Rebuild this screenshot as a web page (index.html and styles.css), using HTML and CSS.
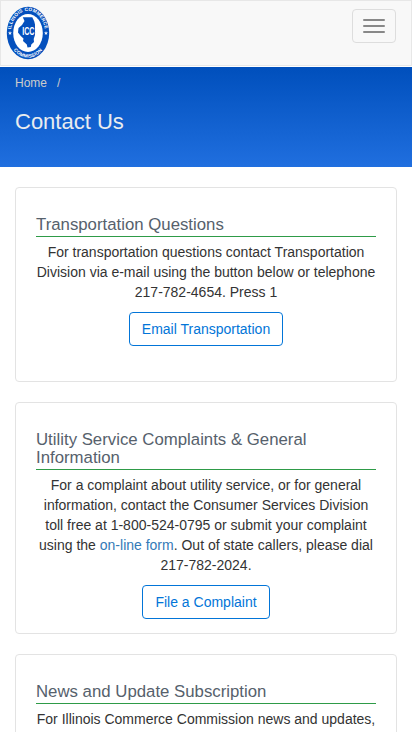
FILE: index.html
```html
<!DOCTYPE html>
<html lang="en">
<head>
<meta charset="utf-8">
<meta name="viewport" content="width=device-width, initial-scale=1">
<title>Contact Us</title>
<link rel="stylesheet" href="styles.css">
</head>
<body>
<header class="navbar">
  <a class="brand" href="#" aria-label="Illinois Commerce Commission">
    <svg width="44" height="54" viewBox="0 0 44 54">
      <defs>
        <path id="arc-top" d="M4.800 27A17.200 22 0 0 1 39.200 27"/>
        <path id="arc-bottom" d="M2.200 27A19.800 24.600 0 0 0 41.800 27"/>
      </defs>
      <ellipse cx="22" cy="27" rx="21.200" ry="26.200" fill="#0450bd"/>
      <ellipse cx="22" cy="27" rx="14.800" ry="19" fill="#fff"/>
      <path fill="#0450bd" d="M16.800 11.200H26.300L28.300 15.500L29 18.500V29L27.700 33L28 36L25.300 38.500L24.800 41L21.500 41.400L20.800 38.500L17 35L17.500 32.500L14.800 30L12 26.500L12.500 22L16 19L18.500 15Z"/>
      <text class="seal-name" transform="translate(22.300 29) scale(.68 1)" text-anchor="middle">ICC</text>
      <text class="seal-ring"><textPath href="#arc-top" startOffset="50%" text-anchor="middle">ILLINOIS COMMERCE</textPath></text>
      <text class="seal-ring"><textPath href="#arc-bottom" startOffset="50%" text-anchor="middle">COMMISSION</textPath></text>
      <path fill="#fff" d="M4 25l.5 1.500H6l-1.200 1 .5 1.500L4 28.100 2.700 29l.5-1.500-1.200-1h1.500zM40 25l.5 1.500H42l-1.200 1 .5 1.500-1.300-.9-1.300.9.5-1.500-1.200-1h1.500z"/>
    </svg>
  </a>
  <button class="toggle" aria-label="Menu"><span></span><span></span><span></span></button>
</header>
<section class="banner">
  <nav class="crumbs"><a href="#">Home</a><span>/</span></nav>
  <h1>Contact Us</h1>
</section>
<main class="cards">
  <section class="card card-tall">
    <h2>Transportation Questions</h2>
    <p>For transportation questions contact Transportation Division via e-mail using the button below or telephone 217-782-4654. Press 1</p>
    <a class="btn" href="#">Email Transportation</a>
  </section>
  <section class="card">
    <h2>Utility Service Complaints &amp; General Information</h2>
    <p>For a complaint about utility service, or for general information, contact the Consumer Services Division toll free at 1-800-524-0795 or submit your complaint using the <a href="#">on-line form</a>. Out of state callers, please dial 217-782-2024.</p>
    <a class="btn" href="#">File a Complaint</a>
  </section>
  <section class="card">
    <h2>News and Update Subscription</h2>
    <p>For Illinois Commerce Commission news and updates,</p>
  </section>
</main>
</body>
</html>
```
FILE: styles.css
```css
* { box-sizing: border-box; }
html { height: 100%; overflow: hidden; }
body {
  height: 100%;
  margin: 0;
  overflow: hidden;
  font: 14px/20px "Liberation Sans", Arial, sans-serif;
  color: #333;
  background: #fff;
}
a { color: #337ab7; text-decoration: none; }
.navbar {
  display: flex;
  justify-content: space-between;
  align-items: flex-start;
  height: 66px;
  margin-bottom: 1px;
  padding: 5px 15px 0 5px;
  border: 1px solid #e7e7e7;
  background: #f8f8f8;
}
.brand svg { display: block; }
.seal-name { font: bold 10.5px "Liberation Sans", sans-serif; fill: #fff; stroke: #0450bd; stroke-width: 1.5px; paint-order: stroke; }
.seal-ring { font: bold 4.8px "Liberation Sans", sans-serif; fill: #fff; letter-spacing: .2px; }
.toggle {
  display: flex;
  flex-direction: column;
  gap: 4px;
  width: 44px;
  height: 34px;
  margin: 3px 0 0;
  padding: 9px 10px;
  border: 1px solid #ddd;
  border-radius: 4px;
  background: transparent;
}
.toggle span { width: 22px; height: 2px; border-radius: 1px; background: #888; }
.banner {
  height: 100px;
  padding: 6px 15px 0;
  background: linear-gradient(#004fbc, #206fdf);
  color: #e9ecef;
}
.crumbs { display: flex; gap: 10px; font-size: 12px; color: #ccc; }
.crumbs a { color: #ccc; }
h1 { margin: 17px 0 0; font-size: 22px; line-height: 24px; font-weight: 400; }
.cards { display: flex; flex-direction: column; gap: 20px; padding: 20px 15px; }
.card {
  padding: 28px 20px 14px;
  border: 1px solid #e3e3e3;
  border-radius: 4px;
  text-align: center;
}
.card-tall { height: 195px; }
h2 {
  margin: 0 0 5px;
  padding-bottom: 2px;
  border-bottom: 1px solid #2e9b47;
  color: #56616c;
  font-size: 16.8px;
  line-height: 18px;
  font-weight: 400;
  text-align: left;
}
p { margin: 0 0 10px; }
.btn {
  display: inline-block;
  padding: 6px 12px;
  border: 1px solid #0275d8;
  border-radius: 4px;
  color: #0275d8;
  vertical-align: top;
}
```
